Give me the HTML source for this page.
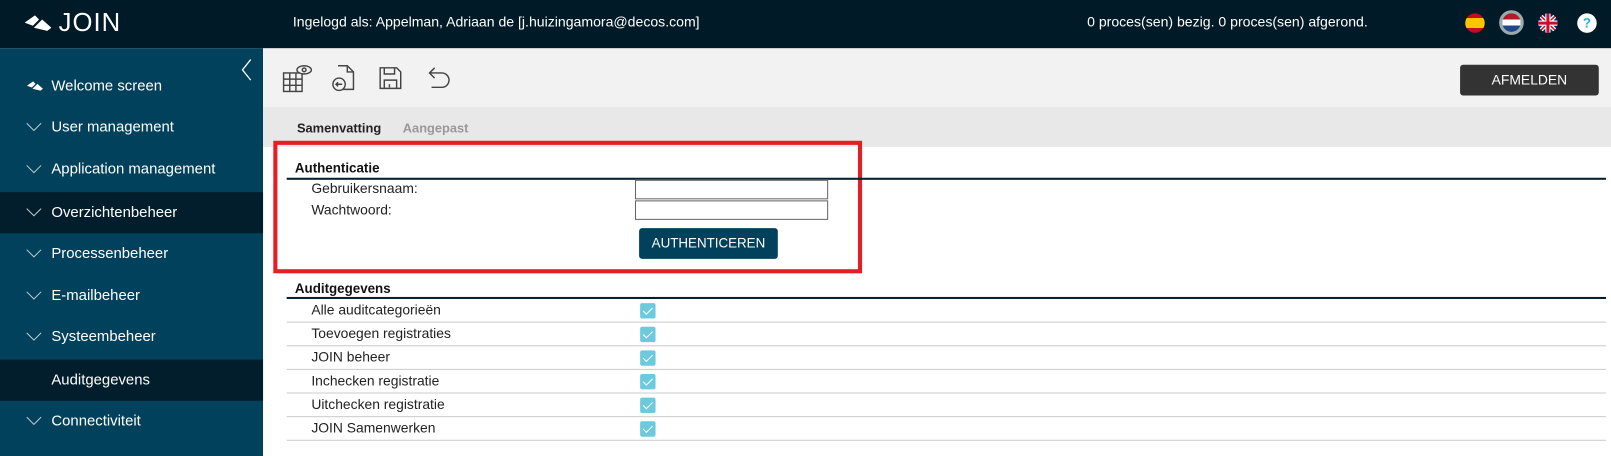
<!DOCTYPE html>
<html><head><meta charset="utf-8"><style>
*{margin:0;padding:0;box-sizing:border-box}
html,body{width:1611px;height:444px;overflow:hidden;background:#fff}
#w{position:absolute;left:0;top:0;width:1568px;height:433px;transform:scale(1.0275);transform-origin:0 0;font-family:"Liberation Sans",sans-serif;font-size:14px}
.a{position:absolute}
#hdr{left:0;top:0;width:1568px;height:47px;background:#011a28;color:#fff}
#side{left:0;top:47px;width:256px;height:397px;background:#02415b}
.it{position:absolute;left:0;width:256px;height:40px;color:#fff;font-size:14.5px;line-height:40px;padding-left:50px}
.it.act{background:#021d2b}
.chev{position:absolute;left:25px;top:13px}
#tb{left:256px;top:47px;width:1355px;height:57px;background:#f2f2f2}
#tabs{left:256px;top:104px;width:1355px;height:39px;background:#e8e8e8}
.lbl{position:absolute;font-size:13.5px;color:#222}
.row{position:absolute;left:279px;width:1284px;height:23px;border-bottom:1px solid #ccc}
.row span{position:absolute;left:24px;top:3px;font-size:13.5px;color:#222}
.cb{position:absolute;left:344px;top:4px;width:15px;height:15px;background:#6ccadf;border-radius:2px}
.cb::after{content:"";position:absolute;left:5px;top:2px;width:4px;height:8px;border:solid #fff;border-width:0 1.5px 1.5px 0;transform:rotate(45deg)}
</style></head><body><div id="w">
<div id="hdr" class="a">
 <svg class="a" style="left:24px;top:13px" width="26" height="20" viewBox="0 0 26 20"><path d="M0 9 L10 2 L14 6 L8 12 Z M9 14 L17 6 L26 14 L22 17 Z" fill="#fff"/></svg>
 <div class="a" style="left:57px;top:8px;font-size:25px;letter-spacing:1px">JOIN</div>
 <div class="a" style="left:285px;top:14px;font-size:13.7px">Ingelogd als: Appelman, Adriaan de [j.huizingamora@decos.com]</div>
 <div class="a" style="left:1058px;top:14px;font-size:13.7px">0 proces(sen) bezig. 0 proces(sen) afgerond.</div>
 <div class="a" style="left:1426px;top:13px;width:19px;height:19px;border-radius:50%;background:linear-gradient(#c60b1e 0 25%,#ffc400 25% 75%,#c60b1e 75%)"></div>
 <div class="a" style="left:1459px;top:10px;width:24px;height:24px;border-radius:50%;border:3px solid #9aa;background:linear-gradient(#ae1c28 0 33%,#fff 33% 67%,#21468b 67%)"></div>
 <svg class="a" style="left:1497px;top:13px" width="19" height="19" viewBox="0 0 19 19"><clipPath id="c"><circle cx="9.5" cy="9.5" r="9.5"/></clipPath><g clip-path="url(#c)"><rect width="19" height="19" fill="#012169"/><path d="M0 0L19 19M19 0L0 19" stroke="#fff" stroke-width="4"/><path d="M0 0L19 19M19 0L0 19" stroke="#c8102e" stroke-width="1.5"/><path d="M9.5 0V19M0 9.5H19" stroke="#fff" stroke-width="5"/><path d="M9.5 0V19M0 9.5H19" stroke="#c8102e" stroke-width="3"/></g></svg>
 <div class="a" style="left:1535px;top:13px;width:19px;height:19px;border-radius:50%;background:#fff;color:#2ab0d8;font-weight:bold;font-size:13px;text-align:center;line-height:19px">?</div>
</div>
<div id="side" class="a">
 <svg class="a" style="left:234px;top:10px" width="12" height="22"><path d="M10 1 L2 11 L10 21" stroke="#fff" stroke-width="1.3" fill="none"/></svg>
</div>
<div class="it" style="top:64px"><svg class="a" style="left:25px;top:14px" width="18" height="12" viewBox="0 0 26 20"><path d="M0 9 L10 2 L14 6 L8 12 Z M9 14 L17 6 L26 14 L22 17 Z" fill="#fff"/></svg>Welcome screen</div>
<div class="it" style="top:104px"><svg class="chev" width="16" height="12"><path d="M1 3 L8 10 L15 3" stroke="#b8c8d0" fill="none"/></svg>User management</div>
<div class="it" style="top:145px"><svg class="chev" width="16" height="12"><path d="M1 3 L8 10 L15 3" stroke="#b8c8d0" fill="none"/></svg>Application management</div>
<div class="it act" style="top:187px"><svg class="chev" width="16" height="12"><path d="M1 3 L8 10 L15 3" stroke="#b8c8d0" fill="none"/></svg>Overzichtenbeheer</div>
<div class="it" style="top:227px"><svg class="chev" width="16" height="12"><path d="M1 3 L8 10 L15 3" stroke="#b8c8d0" fill="none"/></svg>Processenbeheer</div>
<div class="it" style="top:268px"><svg class="chev" width="16" height="12"><path d="M1 3 L8 10 L15 3" stroke="#b8c8d0" fill="none"/></svg>E-mailbeheer</div>
<div class="it" style="top:308px"><svg class="chev" width="16" height="12"><path d="M1 3 L8 10 L15 3" stroke="#b8c8d0" fill="none"/></svg>Systeembeheer</div>
<div class="it act" style="top:350px">Auditgegevens</div>
<div class="it" style="top:390px"><svg class="chev" width="16" height="12"><path d="M1 3 L8 10 L15 3" stroke="#b8c8d0" fill="none"/></svg>Connectiviteit</div>

<div id="tb" class="a">
 <svg class="a" style="left:18px;top:14px" width="30" height="30" fill="none" stroke="#444" stroke-width="1.4"><rect x="2" y="10" width="18" height="18"/><path d="M8 10V28M14 10V28M2 16H20M2 22H20"/><ellipse cx="22" cy="7" rx="7" ry="4" fill="#f2f2f2"/><circle cx="22" cy="7" r="1.8"/></svg>
 <svg class="a" style="left:66px;top:15px" width="26" height="30" fill="none" stroke="#444" stroke-width="1.4"><path d="M7 2H16L22 8V25H7V18"/><path d="M16 2V8H22"/><circle cx="8" cy="20" r="6" fill="#f2f2f2"/><path d="M11 20H5M7 18L5 20L7 22"/></svg>
 <svg class="a" style="left:112px;top:17px" width="24" height="24" fill="none" stroke="#444" stroke-width="1.4"><path d="M2 2H18L22 6V22H2Z"/><path d="M6 2V8H16V2M6 22V14H18V22"/><path d="M11 18V21"/></svg>
 <svg class="a" style="left:160px;top:17px" width="24" height="24" fill="none" stroke="#444" stroke-width="1.4"><path d="M7 2L2 7L7 12M2 7H14A7 7 0 0 1 14 21H4"/></svg>
 <div class="a" style="left:1165px;top:16px;width:135px;height:30px;background:#333;border-radius:3px;color:#fff;font-size:13.5px;text-align:center;line-height:30px">AFMELDEN</div>
</div>
<div id="tabs" class="a">
 <div class="a" style="left:33px;top:14px;font-size:12.5px;font-weight:bold;color:#222">Samenvatting</div>
 <div class="a" style="left:136px;top:14px;font-size:12.5px;font-weight:bold;color:#999">Aangepast</div>
</div>

<div class="a" style="left:266px;top:137px;width:573px;height:129px;border:4px solid #e31e24"></div>
<div class="a" style="left:287px;top:156px;font-size:13px;font-weight:bold;color:#111">Authenticatie</div>
<div class="a" style="left:279px;top:173px;width:1284px;height:2px;background:#02202e"></div>
<div class="lbl" style="left:303px;top:176px">Gebruikersnaam:</div>
<div class="lbl" style="left:303px;top:197px">Wachtwoord:</div>
<div class="a" style="left:618px;top:175px;width:188px;height:19px;border:1px solid #666;background:#fff"></div>
<div class="a" style="left:618px;top:195px;width:188px;height:19px;border:1px solid #666;background:#fff"></div>
<div class="a" style="left:622px;top:222px;width:135px;height:30px;background:#02415b;border-radius:3px;color:#fff;font-size:13px;text-align:center;line-height:30px">AUTHENTICEREN</div>

<div class="a" style="left:287px;top:273px;font-size:13px;font-weight:bold;color:#111">Auditgegevens</div>
<div class="a" style="left:279px;top:289px;width:1284px;height:2px;background:#02202e"></div>
<div class="row" style="top:291px"><span>Alle auditcategorieën</span><div class="cb"></div></div>
<div class="row" style="top:314px"><span>Toevoegen registraties</span><div class="cb"></div></div>
<div class="row" style="top:337px"><span>JOIN beheer</span><div class="cb"></div></div>
<div class="row" style="top:360px"><span>Inchecken registratie</span><div class="cb"></div></div>
<div class="row" style="top:383px"><span>Uitchecken registratie</span><div class="cb"></div></div>
<div class="row" style="top:406px"><span>JOIN Samenwerken</span><div class="cb"></div></div>
</div></body></html>
